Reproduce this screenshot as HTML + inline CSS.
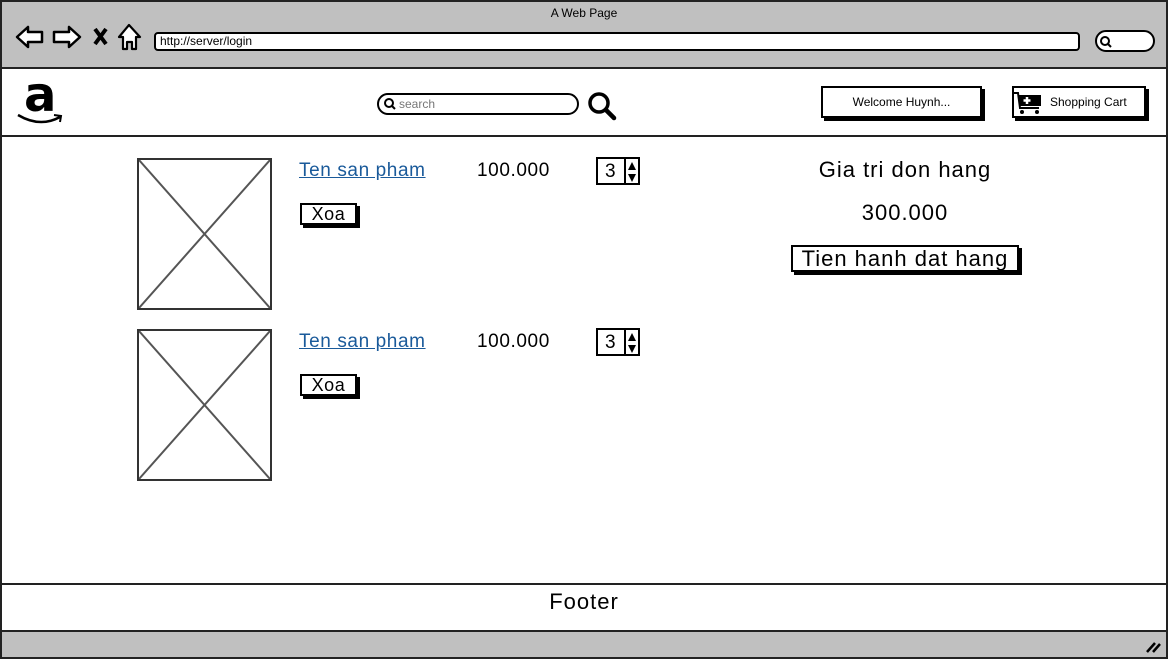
<!DOCTYPE html>
<html><head><meta charset="utf-8"><style>
*{box-sizing:border-box;margin:0;padding:0}
body{width:1168px;height:659px;position:relative;overflow:hidden;background:#fff;font-family:"Liberation Sans",sans-serif;color:#000}
.a{position:absolute}
.btn{position:absolute;border:2px solid #000;background:#fff;box-shadow:3px 3px 0 #000;display:flex;align-items:center;justify-content:center}
.ph{position:absolute;border:2px solid #333;background:#fff}
.link{color:#1a5a9a;text-decoration:underline;font-size:19px;letter-spacing:0.6px}
.t18{font-size:19px;letter-spacing:0.6px}
.spin{position:absolute;width:44px;height:28px;border:2px solid #000;background:#fff;font-size:19px}
.big{font-size:22px;letter-spacing:1px}
</style></head><body>
<div class="a" style="left:0;top:0;width:1168px;height:659px;border:2px solid #222"></div>
<div class="a" style="left:2px;top:2px;width:1164px;height:67px;background:#c0c0c0;border-bottom:2px solid #222"></div>
<div class="a" style="left:0;top:6px;width:1168px;text-align:center;font-size:12px">A Web Page</div>
<svg class="a" style="left:14px;top:22px" width="132" height="30" viewBox="0 0 132 30">
<path d="M3 15 L14 5 L14 10 L28 10 L28 20 L14 20 L14 25 Z" fill="#fff" stroke="#000" stroke-width="2.5" stroke-linejoin="round"/>
<path d="M66 15 L55 5 L55 10 L40 10 L40 20 L55 20 L55 25 Z" fill="#fff" stroke="#000" stroke-width="2.5" stroke-linejoin="round"/>
<path d="M81 7 L92 22 M92 7 L81 22" stroke="#000" stroke-width="4"/>
<path d="M115 3 L126 15 L122 15 L122 27 L118 27 L118 20 L113 20 L113 27 L109 27 L109 15 L105 15 Z" fill="#fff" stroke="#000" stroke-width="2.2" stroke-linejoin="round"/>
</svg>
<div class="a" style="left:154px;top:32px;width:926px;height:19px;background:#fff;border:2px solid #000;border-radius:4px;font-size:12px;padding-left:4px;line-height:15px">http://server/login</div>
<div class="a" style="left:1095px;top:30px;width:60px;height:22px;background:#fff;border:2px solid #000;border-radius:11px"></div>
<svg class="a" style="left:1099px;top:35px" width="14" height="14"><circle cx="6" cy="6" r="4" fill="none" stroke="#000" stroke-width="2"/><path d="M9 9 L12 12" stroke="#000" stroke-width="2"/></svg>
<!-- header -->
<div class="a" style="left:2px;top:135px;width:1164px;height:2px;background:#222"></div>
<div class="a" style="left:24px;top:70px;font-family:'DejaVu Sans',sans-serif;font-weight:bold;font-size:48px;line-height:50px">a</div>
<svg class="a" style="left:16px;top:110px" width="50" height="18"><path d="M2 5 Q24 18 44 7" fill="none" stroke="#000" stroke-width="2.5"/><path d="M38 5 L45 6 L44 12" fill="none" stroke="#000" stroke-width="2"/></svg>
<div class="a" style="left:377px;top:93px;width:202px;height:22px;border:2px solid #000;border-radius:11px;background:#fff;font-size:12px;color:#777;padding-left:20px;line-height:18px">search</div>
<svg class="a" style="left:383px;top:97px" width="14" height="14"><circle cx="6" cy="6" r="4" fill="none" stroke="#000" stroke-width="2"/><path d="M9 9 L12 12" stroke="#000" stroke-width="2"/></svg>
<svg class="a" style="left:586px;top:90px" width="32" height="32"><circle cx="13" cy="13" r="9" fill="none" stroke="#000" stroke-width="3.5"/><path d="M20 20 L28 28" stroke="#000" stroke-width="4.5" stroke-linecap="round"/></svg>
<div class="btn" style="left:821px;top:86px;width:161px;height:32px;font-size:12px">Welcome Huynh...</div>
<div class="btn" style="left:1012px;top:86px;width:134px;height:32px;font-size:12px;justify-content:flex-start;padding-left:36px">Shopping Cart</div>
<svg class="a" style="left:1013px;top:90px" width="32" height="28"><path d="M1 3 L5 3 L7 18 L26 18" fill="none" stroke="#000" stroke-width="2"/><rect x="6" y="5" width="22" height="11" fill="#000"/><path d="M14 7 V14 M10.5 10.5 H17.5" stroke="#fff" stroke-width="2.5"/><circle cx="9" cy="22" r="2"/><circle cx="24" cy="22" r="2"/></svg>
<!-- items -->
<div class="ph" style="left:137px;top:158px;width:135px;height:152px"><svg width="131" height="148" style="display:block"><path d="M0 0 L131 148 M131 0 L0 148" stroke="#555" stroke-width="2"/></svg></div>
<div class="ph" style="left:137px;top:329px;width:135px;height:152px"><svg width="131" height="148" style="display:block"><path d="M0 0 L131 148 M131 0 L0 148" stroke="#555" stroke-width="2"/></svg></div>
<div class="a link" style="left:299px;top:160px">Ten san pham</div>
<div class="a link" style="left:299px;top:331px">Ten san pham</div>
<div class="a t18" style="left:477px;top:160px">100.000</div>
<div class="a t18" style="left:477px;top:331px">100.000</div>
<div class="spin" style="left:596px;top:157px"><span style="position:absolute;left:7px;top:2px">3</span><div class="a" style="left:26px;top:0;width:2px;height:24px;background:#000"></div><svg class="a" style="left:29px;top:2px" width="10" height="22"><path d="M5 1 L9 9 L1 9 Z M5 21 L9 13 L1 13 Z" fill="#000"/></svg></div>
<div class="spin" style="left:596px;top:328px"><span style="position:absolute;left:7px;top:2px">3</span><div class="a" style="left:26px;top:0;width:2px;height:24px;background:#000"></div><svg class="a" style="left:29px;top:2px" width="10" height="22"><path d="M5 1 L9 9 L1 9 Z M5 21 L9 13 L1 13 Z" fill="#000"/></svg></div>
<div class="btn" style="left:300px;top:203px;width:57px;height:22px;font-size:18px;letter-spacing:0.6px">Xoa</div>
<div class="btn" style="left:300px;top:374px;width:57px;height:22px;font-size:18px;letter-spacing:0.6px">Xoa</div>
<div class="a big" style="left:770px;top:157px;width:270px;text-align:center">Gia tri don hang</div>
<div class="a big" style="left:770px;top:200px;width:270px;text-align:center">300.000</div>
<div class="btn big" style="left:791px;top:245px;width:228px;height:27px">Tien hanh dat hang</div>
<!-- footer -->
<div class="a" style="left:2px;top:583px;width:1164px;height:2px;background:#222"></div>
<div class="a big" style="left:0;top:589px;width:1168px;text-align:center">Footer</div>
<div class="a" style="left:2px;top:630px;width:1164px;height:27px;background:#c0c0c0;border-top:2px solid #222"></div>
<svg class="a" style="left:1145px;top:640px" width="16" height="14"><path d="M2 12 L10 3 M8 12 L15 4" stroke="#000" stroke-width="2.5"/></svg>
</body></html>
